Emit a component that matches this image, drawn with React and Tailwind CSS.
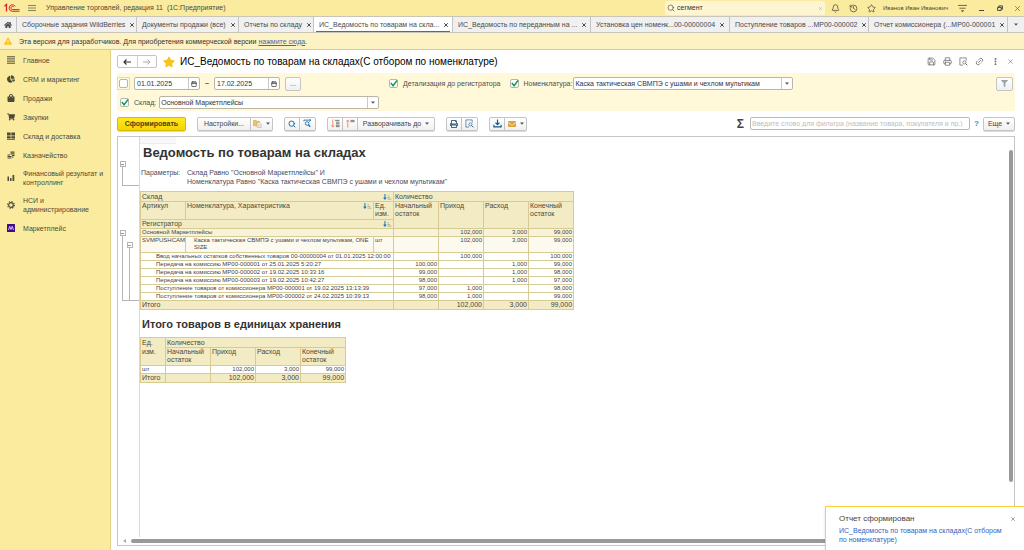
import { useState } from "react";
import clsx from "clsx";
import {
  Bell,
  Calendar,
  History,
  Link2,
  MoreVertical,
  Printer,
  Save,
  Search,
  Star,
  X,
} from "lucide-react";
import {
  FaChartPie,
  FaEnvelope,
  FaFilter,
  FaHome,
  FaPrint,
  FaShoppingBag,
  FaShoppingCart,
  FaStar,
} from "react-icons/fa";

const tabs = [
  { title: "Сборочные задания WildBerries", width: "w-[120px]" },
  { title: "Документы продажи (все)", width: "w-[102px]" },
  { title: "Отчеты по складу", width: "w-[75px]" },
  { title: "ИС_Ведомость по товарам на скла...", width: "w-[139px]", active: true },
  { title: "ИС_Ведомость по переданным на ...", width: "w-[138px]" },
  { title: "Установка цен номенк...", number: "00-00000004", width: "w-[139px]" },
  { title: "Поступление товаров ...", number: "МР00-000002", width: "w-[139px]" },
  { title: "Отчет комиссионера (...", number: "МР00-000001", width: "w-[139px]" },
];

const registrators = [
  ["Ввод начальных остатков собственных товаров 00-00000004 от 01.01.2025 12:00:00", "", "100,000", "", "100,000"],
  ["Передача на комиссию МР00-000001 от 25.01.2025 5:20:27", "100,000", "", "1,000", "99,000"],
  ["Передача на комиссию МР00-000002 от 19.02.2025 10:33:16", "99,000", "", "1,000", "98,000"],
  ["Передача на комиссию МР00-000003 от 19.02.2025 10:42:27", "98,000", "", "1,000", "97,000"],
  ["Поступление товаров от комиссионера МР00-000001 от 19.02.2025 13:13:39", "97,000", "1,000", "", "98,000"],
  ["Поступление товаров от комиссионера МР00-000002 от 24.02.2025 10:39:13", "98,000", "1,000", "", "99,000"],
];

/* ---------- small drawings ---------- */

const Logo = () => (
  <svg viewBox="0 0 32 20" className="w-4 h-[10px]" fill="none" stroke="#d8232a" strokeWidth="2">
    <path d="M1 6.500 L5 3 V17" strokeWidth="2.500" />
    <path d="M22.500 7 A6.500 6.500 0 1 0 17 16.500 H31" />
    <path d="M19.500 8 A3.200 3.200 0 1 0 17 13.200 H31" />
  </svg>
);

const LinesIcon = () => (
  <svg viewBox="0 0 8 8" className="w-2 h-2" stroke="#4d4a3a">
    <path d="M0 .8H8M0 2.900H8M0 5.100H8M0 7.200H8" />
  </svg>
);

const StockIcon = () => (
  <svg viewBox="0 0 16 16" className="w-2 h-2" fill="#4d4a3a">
    <path d="M0 1H7.300V7H0zM8.700 1H16V7H8.700zM0 8.500H7.300V13H0zM8.700 8.500H16V13H8.700zM0 14H16V15.500H0z" />
  </svg>
);

const CoinsIcon = () => (
  <svg viewBox="0 0 16 16" className="w-2 h-2" fill="#4d4a3a">
    <path d="M7 1h8v2.500H7zM7 4.500h8V7H7zM1 7h5v2H1zM10 8h5v2h-5zM1 10h8v2H1zM1 13h8v2.200H1zM10 11h3v2h-3z" />
  </svg>
);

const BarsIcon = () => (
  <svg viewBox="0 0 16 16" className="w-2 h-2" fill="#4d4a3a">
    <path d="M1 5h3v9H1zM6 8h3v6H6zM11 2h3.500v12H11z" />
  </svg>
);

const GearIcon = () => (
  <svg viewBox="0 0 16 16" className="w-2 h-2" fill="none" stroke="#4d4a3a">
    <circle cx="8" cy="8" r="4.600" strokeWidth="2.400" />
    <circle cx="8" cy="8" r="6.800" strokeWidth="2.200" strokeDasharray="2.600 2.740" />
  </svg>
);

const MarketIcon = () => (
  <svg viewBox="0 0 16 16" className="w-2 h-2">
    <rect width="16" height="16" rx="1" fill="#3d0d86" />
    <path d="M3 12L5.500 4.500L8 11L10.500 4.500L13 12" fill="none" stroke="#e3c6ff" strokeWidth="1.800" />
  </svg>
);

const WarningIcon = () => (
  <svg viewBox="0 0 16 16" className="w-2 h-2">
    <path d="M8 1L15.500 15H.5z" fill="#fbc31c" stroke="#fbc31c" strokeLinejoin="round" />
    <path d="M8 6V10.500M8 12V13.500" stroke="#fff" strokeWidth="1.600" />
  </svg>
);

const ServiceIcon = () => (
  <svg viewBox="0 0 16 16" className="w-[9px] h-[9px]" fill="none" stroke="#57533f" strokeWidth="1.500">
    <path d="M0 2.500H16M2.500 7.500H13.500" />
    <path d="M5 11H11L8 14.500z" fill="#57533f" stroke="none" />
  </svg>
);

const RestoreIcon = () => (
  <svg viewBox="0 0 10 10" className="w-[6px] h-[6px]" fill="none" stroke="#333" strokeWidth="1.500">
    <path d="M1 4H7V9H1zM3 4V1.500H9V7H7" />
  </svg>
);

const Caret = () => (
  <svg viewBox="0 0 6 4" className="w-[4px] h-[3px] shrink-0" fill="#555">
    <path d="M0 .5H6L3 3.700z" />
  </svg>
);

const PreviewIcon = ({ className }) => (
  <svg viewBox="0 0 20 20" className={className} fill="none" stroke="currentColor" strokeWidth="1.600">
    <path d="M9 18H2V2H16V8" />
    <circle cx="12" cy="12" r="3.500" />
    <path d="M14.500 14.500L18.500 18.500" strokeWidth="2.200" />
  </svg>
);

const VariantsIcon = () => (
  <svg viewBox="0 0 20 20" className="w-[9px] h-[9px]">
    <path d="M1 3H7L9 5H14V15H1z" fill="#f1c257" stroke="#cf9a32" />
    <path d="M9 8H15L18 11V18.500H9z" fill="#fff" stroke="#8d8d8d" />
    <path d="M11 12.500H16M11 15.500H16" stroke="#b98f3e" />
  </svg>
);

const FindNextIcon = () => (
  <svg viewBox="0 0 20 20" className="w-[9px] h-[9px]" fill="none" stroke="#1c6fa8" strokeWidth="2">
    <path d="M2 5V2.500H17M14 0L17.500 2.500L14 6" />
    <circle cx="9" cy="10" r="4" />
    <path d="M12 13L16 17" strokeWidth="3" />
  </svg>
);

const CollapseIcon = ({ up }) => (
  <svg viewBox="0 0 20 20" className="w-[9px] h-[9px]" fill="none">
    <path
      d={up ? "M4 19V3M1 6L4 2L7 6" : "M4 1V17M1 14L4 18L7 14"}
      stroke="#f0764a"
      strokeWidth="1.800"
    />
    <path d={up ? "M10 3H19M10 6H19" : "M9 3H19M11 7H19M11 10.500H19M11 14H19M11 17H19"} stroke="#6b6b6b" strokeWidth="2" />
  </svg>
);

const SaveFileIcon = () => (
  <svg viewBox="0 0 20 20" className="w-[9px] h-[9px]" fill="none" stroke="#155a86" strokeWidth="2.600">
    <path d="M10 1V12M5.500 8L10 12.500L14.500 8M2 13V17.500H18V13" />
  </svg>
);

const SortIcon = () => (
  <svg viewBox="0 0 20 14" className="w-[9px] h-[6px] shrink-0" fill="none">
    <path d="M4 0V12M1 8.500L4 12L7 8.500" stroke="#1d7fc0" strokeWidth="2.400" />
    <path d="M10 4H13M10 8H16M10 12H19" stroke="#8a8468" strokeWidth="1.400" />
  </svg>
);

/* ---------- controls ---------- */

const Check = ({ label, defaultChecked = true, focused }) => {
  const [checked, setChecked] = useState(defaultChecked);
  return (
    <label className="flex items-center gap-[5px] text-[7px] text-[#4d4d4d] whitespace-nowrap">
      <span className={clsx("grid", focused && "p-px border border-[#fadf66]")}>
        <input
          type="checkbox"
          aria-label={label || "Период"}
          checked={checked}
          onChange={() => setChecked(!checked)}
          className="col-start-1 row-start-1 appearance-none w-[9px] h-[9px] bg-white border border-[#b5b5b5] rounded-[2px]"
        />
        {checked && (
          <svg viewBox="0 0 10 10" className="col-start-1 row-start-1 w-[9px] h-[9px] pointer-events-none" fill="none">
            <path d="M2 4.500L4.500 7.500L9 1.500" stroke="#0b9a4f" strokeWidth="1.600" />
          </svg>
        )}
      </span>
      {label && <span className="pt-px">{label}</span>}
    </label>
  );
};

const DateField = ({ label, value }) => (
  <div className="flex h-[13px] w-[66px] bg-white border border-[#b9b6a6] rounded-[2px]">
    <input aria-label={label} defaultValue={value} className="min-w-0 flex-1 px-[2px] pt-px text-[7px] text-[#333] outline-none" />
    <button aria-label="Выбрать дату" className="w-[11px] flex items-center justify-center border-l border-[#c9c9c9]">
      <Calendar className="w-[6px] h-[6px] text-[#444]" strokeWidth={3} />
    </button>
  </div>
);

const SelectField = ({ label, value, className }) => (
  <div className={clsx("grid h-[13px] bg-white border border-[#b9b6a6] rounded-[2px]", className)}>
    <select aria-label={label} className="col-start-1 row-start-1 appearance-none min-w-0 px-[1px] pt-px text-[7px] leading-[10px] text-[#333] outline-none">
      <option>{value}</option>
    </select>
    <span className="col-start-1 row-start-1 justify-self-end w-[11px] flex items-center justify-center border-l border-[#c9c9c9] pointer-events-none">
      <Caret />
    </span>
  </div>
);

const Group = ({ children }) => (
  <div className="flex h-[14px] shrink-0 border border-[#c4c4c4] rounded-[2px] bg-linear-to-b from-white to-[#f0f0f0] divide-x divide-[#c4c4c4] shadow-[0_1px_0_#dadada]">
    {children}
  </div>
);

const Tool = ({ label, width = "w-[15px]", children }) => (
  <button aria-label={label} className={clsx("flex items-center justify-center gap-1 text-[7px] leading-[12px] text-[#444] whitespace-nowrap", width)}>
    {children}
  </button>
);

/* ---------- page parts ---------- */

const TopBar = () => (
  <header className="flex items-center h-4 pl-1 pr-[2px] bg-[#fbeb9e] text-[#4d4a3a]">
    <Logo />
    <button aria-label="Меню" className="ml-2">
      <svg viewBox="0 0 8 8" className="w-2 h-2" stroke="#6d684f" strokeWidth="0.800">
        <path d="M0 1.500H8M0 4H8M0 6.500H8" />
      </svg>
    </button>
    <span className="ml-[10px] pt-px text-[7px] whitespace-nowrap">Управление торговлей, редакция 11&nbsp; (1С:Предприятие)</span>
    <div className="ml-auto flex items-center w-[160px] h-[14px] px-[2px] gap-[2px] bg-[#fef6d2] rounded-[2px]">
      <Search className="w-2 h-2" />
      <input aria-label="Поиск" defaultValue="сегмент" className="min-w-0 flex-1 text-[7px] text-[#333] outline-none" />
      <button aria-label="Очистить">
        <X className="w-[5px] h-[5px] text-[#999]" />
      </button>
    </div>
    <div className="flex items-center gap-[9px] ml-[6px]">
      <button aria-label="Уведомления"><Bell className="w-[9px] h-[9px]" /></button>
      <button aria-label="История"><History className="w-[9px] h-[9px]" /></button>
      <button aria-label="Избранное"><Star className="w-[9px] h-[9px]" /></button>
    </div>
    <span className="ml-[7px] w-[69px] text-[6px] whitespace-nowrap">Иванов Иван Иванович</span>
    <button aria-label="Сервис" className="ml-[6px]"><ServiceIcon /></button>
    <button aria-label="Свернуть" className="ml-[12px] w-[5px] h-[5px] border-b border-[#444]" />
    <button aria-label="Восстановить" className="ml-[13px]"><RestoreIcon /></button>
    <button aria-label="Закрыть" className="ml-[10px]"><X className="w-[9px] h-[9px]" strokeWidth={1.5} /></button>
  </header>
);

const TabBar = () => (
  <nav className="flex h-[17px] bg-[#f0f0f0] border-y border-[#c9c6b8] text-[7px] text-[#4a4a4a]">
    <button aria-label="Начальная страница" className="w-[17px] shrink-0 flex items-center justify-center border-r border-[#c4c4c4]">
      <FaHome className="w-2 h-2" />
    </button>
    {tabs.map((tab) => (
      <div
        key={tab.title}
        className={clsx("flex flex-auto items-stretch border-r border-[#c4c4c4] pr-[2px]", tab.width, tab.active && "bg-white")}
      >
        <div className={clsx("flex flex-1 min-w-0 items-center ml-[2px] pl-[3px] pr-[2px] pt-[2px] border-b", tab.active ? "border-[#0b9a4f]" : "border-transparent")}>
          <button className="flex flex-1 justify-between whitespace-nowrap">
            <span>{tab.title}</span>
            <span>{tab.number}</span>
          </button>
          <button aria-label="Закрыть вкладку" className="ml-1">
            <X className="w-[6px] h-[6px]" strokeWidth={4} />
          </button>
        </div>
      </div>
    ))}
    <button aria-label="Все вкладки" className="w-4 shrink-0 flex items-center justify-center"><Caret /></button>
  </nav>
);

const sections = [
  { title: "Главное", icon: <LinesIcon /> },
  { title: "CRM и маркетинг", icon: <FaChartPie className="w-2 h-2" /> },
  { title: "Продажи", icon: <FaShoppingBag className="w-2 h-2" /> },
  { title: "Закупки", icon: <FaShoppingCart className="w-2 h-2" /> },
  { title: "Склад и доставка", icon: <StockIcon /> },
  { title: "Казначейство", icon: <CoinsIcon /> },
  { title: "Финансовый результат и контроллинг", icon: <BarsIcon />, tall: true },
  { title: "НСИ и администрирование", icon: <GearIcon />, tall: true },
  { title: "Маркетплейс", icon: <MarketIcon /> },
];

const Sidebar = () => (
  <aside className="w-[111px] shrink-0 bg-[#fbeb9e] border-r border-[#e0d08a]">
    {sections.map((s) => (
      <a
        key={s.title}
        href="#"
        className={clsx("flex items-center gap-2 pl-[7px] pr-1 pt-px text-[7px] leading-[9px] text-[#4d4a3a]", s.tall ? "h-[27px]" : "h-[19px]")}
      >
        <span className="w-2 shrink-0">{s.icon}</span>
        {s.title}
      </a>
    ))}
  </aside>
);

const TitleRow = () => (
  <div className="flex items-center h-[23px] pr-px">
    <div className="flex w-10 h-[13px] border border-[#c4c4c4] rounded-[2px] divide-x divide-[#d0d0d0] text-[#333]">
      <button aria-label="Назад" className="flex-1 flex items-center justify-center">
        <svg viewBox="0 0 8 6" className="w-[8px] h-[6px]" fill="none" stroke="#333" strokeWidth="1.200"><path d="M8 3H1M3.500 .5L1 3L3.500 5.500" /></svg>
      </button>
      <button aria-label="Вперед" className="flex-1 flex items-center justify-center">
        <svg viewBox="0 0 8 6" className="w-[8px] h-[6px]" fill="none" stroke="#aaa"><path d="M0 3H7M4.500 .5L7 3L4.500 5.500" /></svg>
      </button>
    </div>
    <FaStar className="ml-[6px] w-3 h-3 text-[#f9c31f]" />
    <h1 className="ml-[5px] text-[10px] text-black whitespace-nowrap">ИС_Ведомость по товарам на складах(С отбором по номенклатуре)</h1>
    <div className="ml-auto flex items-center gap-[7px] text-[#666]">
      <button aria-label="Сохранить"><Save className="w-[9px] h-[9px]" /></button>
      <button aria-label="Печать"><Printer className="w-[9px] h-[9px]" /></button>
      <button aria-label="Просмотр"><PreviewIcon className="w-[9px] h-[9px]" /></button>
      <button aria-label="Ссылка"><Link2 className="w-[9px] h-[9px] -rotate-45" /></button>
      <button aria-label="Еще"><MoreVertical className="w-[9px] h-[9px]" strokeWidth={3} /></button>
      <button aria-label="Закрыть"><X className="w-[7px] h-[7px]" /></button>
    </div>
  </div>
);

const Filters = () => (
  <div className="flex flex-col gap-[6px] pt-[4px] pb-[2px] bg-[#fff9d9]">
    <div className="flex items-center h-[13px]">
      <Check defaultChecked={false} focused />
      <div className="flex items-center ml-1">
        <DateField label="Начало периода" value="01.01.2025" />
        <span className="w-[14px] text-center text-[7px]">–</span>
        <DateField label="Конец периода" value="17.02.2025" />
      </div>
      <button className="ml-[5px] w-4 h-[14px] text-[7px] leading-[10px] text-[#555] border border-[#c4c4c4] rounded-[2px] bg-linear-to-b from-white to-[#f0f0f0]">...</button>
      <div className="ml-[88px] flex items-center">
        <Check label="Детализация до регистратора" />
        <div className="ml-[9px] flex items-center gap-px">
          <Check label="Номенклатура:" />
          <SelectField label="Номенклатура" value="Каска тактическая СВМПЭ с ушами и чехлом мультикам" className="w-[220px]" />
        </div>
      </div>
      <button aria-label="Отбор" className="ml-auto mr-[2px] w-[17px] h-[14px] flex items-center justify-center border border-[#c4c4c4] rounded-[2px] bg-linear-to-b from-white to-[#f0f0f0]">
        <FaFilter className="w-[7px] h-[7px] text-[#9aa3ad]" />
      </button>
    </div>
    <div className="flex items-center h-[13px] pl-[3px] gap-[3px]">
      <Check label="Склад:" />
      <SelectField label="Склад" value="Основной Маркетплейсы" className="w-[220px]" />
    </div>
  </div>
);

const Toolbar = () => (
  <div className="flex items-center h-[25px] gap-[11px]">
    <button className="w-[69px] h-[14px] text-[7px] leading-[12px] font-bold text-[#4d4310] border border-[#d8b900] rounded-[2px] bg-linear-to-b from-[#ffe81f] to-[#f5d400] shadow-[0_1px_0_#dadada]">
      Сформировать
    </button>
    <Group>
      <Tool width="w-[53px]">Настройки...</Tool>
      <Tool label="Варианты" width="w-[21px]"><VariantsIcon /><Caret /></Tool>
    </Group>
    <Group>
      <Tool label="Найти"><Search className="w-2 h-2 text-[#1c6fa8]" strokeWidth={3} /></Tool>
      <Tool label="Найти далее"><FindNextIcon /></Tool>
    </Group>
    <Group>
      <Tool label="Развернуть"><CollapseIcon /></Tool>
      <Tool label="Свернуть"><CollapseIcon up /></Tool>
      <Tool width="w-[76px]">Разворачивать до <Caret /></Tool>
    </Group>
    <Group>
      <Tool label="Печать"><FaPrint className="w-2 h-2 text-[#456b8c]" /></Tool>
      <Tool label="Предпросмотр"><PreviewIcon className="w-[9px] h-[9px] text-[#2f6c91]" /></Tool>
    </Group>
    <Group>
      <Tool label="Сохранить в файл"><SaveFileIcon /></Tool>
      <Tool label="Отправить" width="w-[21px]"><FaEnvelope className="w-2 h-2 text-[#e0a33c]" /><Caret /></Tool>
    </Group>
    <div className="ml-auto flex items-center">
      <span className="text-[12px] leading-[14px] font-bold text-[#444]">Σ</span>
      <input
        aria-label="Фильтр"
        placeholder="Введите слово для фильтра (название товара, покупателя и пр.)"
        className="ml-[6px] w-[220px] h-[13px] px-[1px] text-[7px] border border-[#b9b9b9] rounded-[2px] placeholder:text-[#bdbdbd] outline-none"
      />
      <button aria-label="Справка" className="w-[13px] text-[8px] font-bold text-[#2a93d5]">?</button>
      <Group>
        <Tool width="w-[30px]">Еще <Caret /></Tool>
      </Group>
    </div>
  </div>
);

const cell = "border border-[#d6cb93] px-[1px] align-top";
const num = clsx(cell, "text-right");
const head = "bg-[#f3ebc3] text-[7px] leading-[9px] text-[#4d4a3a] text-left";
const th = clsx(cell, "font-normal");

const ReportTable = () => (
  <table className="table-fixed w-[434px] border-collapse text-[6px] leading-[7px] text-[#444]">
    <colgroup>
      <col className="w-[45px]" />
      <col className="w-[188px]" />
      <col className="w-[20px]" />
      <col className="w-[45px]" span={4} />
    </colgroup>
    <thead className={head}>
      <tr>
        <th colSpan={3} className={th}>
          <div className="flex items-center justify-between">Склад <SortIcon /></div>
        </th>
        <th colSpan={4} className={th}>Количество</th>
      </tr>
      <tr className="h-[18px] leading-[8px]">
        <th className={th}>Артикул</th>
        <th className={th}>
          <div className="flex items-center justify-between">Номенклатура, Характеристика <SortIcon /></div>
        </th>
        <th className={th}>Ед. изм.</th>
        <th rowSpan={2} className={th}>Начальный остаток</th>
        <th rowSpan={2} className={th}>Приход</th>
        <th rowSpan={2} className={th}>Расход</th>
        <th rowSpan={2} className={th}>Конечный остаток</th>
      </tr>
      <tr className="h-[9px] leading-[8px]">
        <th colSpan={3} className={th}>
          <div className="flex items-center justify-between">Регистратор <SortIcon /></div>
        </th>
      </tr>
    </thead>
    <tbody>
      <tr className="bg-[#f8f2d8]">
        <td colSpan={3} className={cell}>Основной Маркетплейсы</td>
        <td className={num} />
        <td className={num}>102,000</td>
        <td className={num}>3,000</td>
        <td className={num}>99,000</td>
      </tr>
      <tr className="h-[16px] bg-[#fcfaee]">
        <td className={cell}>SVMPUSHCAM</td>
        <td className={clsx(cell, "pl-[8px]")}>Каска тактическая СВМПЭ с ушами и чехлом мультикам, ONE SIZE</td>
        <td className={cell}>шт</td>
        <td className={num} />
        <td className={num}>102,000</td>
        <td className={num}>3,000</td>
        <td className={num}>99,000</td>
      </tr>
      {registrators.map(([name, ...values]) => (
        <tr key={name} className="h-[8px] bg-white">
          <td colSpan={3} className={clsx(cell, "pl-[15px] whitespace-nowrap")}>{name}</td>
          {values.map((v, i) => (
            <td key={i} className={num}>{v}</td>
          ))}
        </tr>
      ))}
    </tbody>
    <tfoot className="bg-[#f3ebc3] text-[7px] leading-[8px]">
      <tr>
        <td colSpan={3} className={cell}>Итого</td>
        <td className={num} />
        <td className={num}>102,000</td>
        <td className={num}>3,000</td>
        <td className={num}>99,000</td>
      </tr>
    </tfoot>
  </table>
);

const UnitsTable = () => (
  <table className="table-fixed w-[206px] border-collapse text-[6px] leading-[7px] text-[#444]">
    <colgroup>
      <col className="w-[25px]" />
      <col className="w-[45px]" span={4} />
    </colgroup>
    <thead className={head}>
      <tr>
        <th rowSpan={2} className={clsx(th, "pr-[6px]")}>Ед. изм.</th>
        <th colSpan={4} className={th}>Количество</th>
      </tr>
      <tr className="h-[18px] leading-[8px]">
        <th className={th}>Начальный остаток</th>
        <th className={th}>Приход</th>
        <th className={th}>Расход</th>
        <th className={th}>Конечный остаток</th>
      </tr>
    </thead>
    <tbody>
      <tr>
        <td className={cell}>шт</td>
        <td className={num} />
        <td className={num}>102,000</td>
        <td className={num}>3,000</td>
        <td className={num}>99,000</td>
      </tr>
    </tbody>
    <tfoot className="bg-[#f3ebc3] text-[7px] leading-[8px]">
      <tr>
        <td className={cell}>Итого</td>
        <td className={num} />
        <td className={num}>102,000</td>
        <td className={num}>3,000</td>
        <td className={num}>99,000</td>
      </tr>
    </tfoot>
  </table>
);

// Grouping brackets to the left of the spreadsheet rows
const Outline = () => (
  <svg width="21" height="170" className="shrink-0" fill="none" stroke="#b5b5b5" shapeRendering="crispEdges">
    <path d="M4.500 29V48.500H21M4.500 98V163.500H21M11.500 110V163" />
    <path d="M2 24.500H7V29.500H2zM2 93.500H7V98.500H2zM9 105.500H14V110.500H9z" fill="#fff" />
    <path d="M3 27.500H6M3 96.500H6M10 108.500H13" stroke="#999" />
  </svg>
);

const Sheet = () => (
  <div className="flex flex-col flex-1 min-h-0 border border-[#c6c6c6]">
    <div className="flex flex-1 min-h-0">
      <Outline />
      <div className="flex-1 min-w-0 border-l border-[#d9d9d9]">
        <div className="w-9 h-[7px] bg-[#f7f7f7] border-b border-[#ececec]" />
        <h2 className="pl-[3px] text-[13px] leading-[18px] font-bold text-[#333]">Ведомость по товарам на складах</h2>
        <div className="flex gap-2 mt-[6px] pl-[1px] text-[7px] leading-[9px] text-[#4a4a5a]">
          <span className="w-[38px]">Параметры:</span>
          <p>
            Склад Равно "Основной Маркетплейсы" И<br />
            Номенклатура Равно "Каска тактическая СВМПЭ с ушами и чехлом мультикам"
          </p>
        </div>
        <div className="mt-[5px]">
          <ReportTable />
        </div>
        <h2 className="mt-[6px] mb-[5px] pl-[2px] text-[11px] leading-[16px] font-bold text-[#333]">Итого товаров в единицах хранения</h2>
        <UnitsTable />
      </div>
      <div className="w-[7px] flex flex-col items-center pt-[13px]">
        <div className="w-[4px] h-[332px] rounded-full bg-[#999]" />
      </div>
    </div>
    <div className="flex items-center h-2 pl-[5px] gap-[5px]">
      <svg viewBox="0 0 3 4" className="w-[3px] h-[4px]" fill="#aaa"><path d="M3 0V4L0 2z" /></svg>
      <div className="h-[4px] flex-1 mr-[9px] rounded-full bg-[#999]" />
    </div>
  </div>
);

const Notification = () => (
  <div className="absolute right-0 bottom-0 w-[199px] h-11 pl-[13px] pr-2 pt-[7px] bg-white border-t border-l border-[#fbd03c] shadow">
    <div className="flex items-center justify-between text-[8px] leading-[10px] text-[#444]">
      Отчет сформирован
      <button aria-label="Закрыть"><X className="w-[6px] h-[6px]" /></button>
    </div>
    <a href="#" className="block mt-[2px] w-[168px] text-[7px] leading-[9px] text-[#2f62c4]">
      ИС_Ведомость по товарам на складах(С отбором по номенклатуре)
    </a>
  </div>
);

const App = () => {
  return (
    <div className="relative flex flex-col h-screen overflow-hidden bg-white font-['Liberation_Sans',Arial,sans-serif]">
      <TopBar />
      <TabBar />
      <div className="flex items-center h-[17px] pl-1 gap-[7px] bg-[#fdf2c4] border-b border-[#cdc9b8] text-[7px] text-[#333]">
        <WarningIcon />
        <p className="pt-[2px]">
          Эта версия для разработчиков. Для приобретения коммерческой версии{" "}
          <a href="#" className="text-[#3a6ea8] underline">нажмите сюда</a>.
        </p>
      </div>
      <div className="flex flex-1 min-h-0">
        <Sidebar />
        <main className="flex flex-col flex-1 min-w-0 pl-[6px] pr-[9px] pb-[4px]">
          <TitleRow />
          <Filters />
          <Toolbar />
          <Sheet />
        </main>
      </div>
      <Notification />
    </div>
  );
};

export default App;
